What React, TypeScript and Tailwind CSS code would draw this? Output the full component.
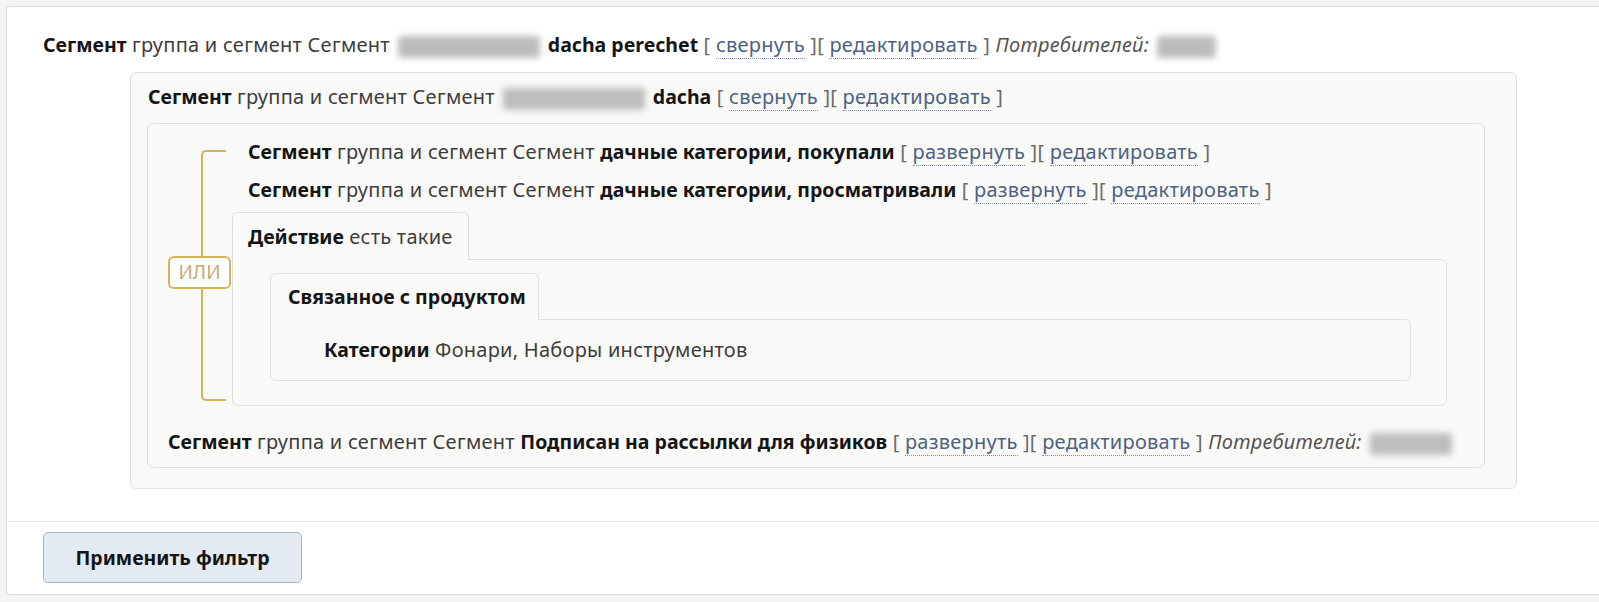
import React from "react";

const Blur = ({ w }: { w: number }) => (
  <span className="inline-block align-middle mx-[8px] h-[22px] bg-[#bdbdbd] rounded-[3px] blur-[3px]" style={{ width: w }} />
);

const Link = ({ children }: { children: React.ReactNode }) => (
  <span className="text-[#4d6183] border-b border-dotted border-[#7d8fb0]">{children}</span>
);

const B = ({ children }: { children: React.ReactNode }) => (
  <b className="font-bold text-[#151515] text-[19.5px] tracking-normal">{children}</b>
);

const Actions = ({ first }: { first: string }) => (
  <>
    {" "}
    <span className="text-[#6b6b6b]">[ </span>
    <Link>{first}</Link>
    <span className="text-[#6b6b6b]"> ][ </span>
    <Link>редактировать</Link>
    <span className="text-[#6b6b6b]"> ]</span>
  </>
);

const Head = () => (
  <>
    <B>Сегмент</B> группа и сегмент Сегмент
  </>
);

export default function App() {
  return (
    <div
      className="min-h-[602px] bg-[#f4f4f2] pt-[6px] pl-[6px] text-[20px] tracking-[0.25px] text-[#3d3d3d]"
      style={{ fontFamily: '"Noto Sans", "Open Sans", sans-serif' }}
    >
      <div className="bg-white border-y border-l border-[#dcdcdc] rounded-l-[4px]">
        <div className="pt-[25px] pb-[32px]">
          <div className="pl-[36px] leading-[26px] whitespace-nowrap">
            <Head />
            <Blur w={142} />
            <B>dacha perechet</B>
            <Actions first="свернуть" />{" "}
            <i className="text-[#555]">Потребителей:</i>
            <Blur w={59} />
          </div>

          <div className="ml-[123px] mt-[14px] w-[1387px] bg-[#f9f9f7] border border-[#e0e0de] rounded-[6px] pt-[11px] pl-[16px] pr-[31px] pb-[20px]">
            <div className="pl-[1px] leading-[26px] whitespace-nowrap">
              <Head />
              <Blur w={142} />
              <B>dacha</B>
              <Actions first="свернуть" />
            </div>

            <div className="mt-[13px] bg-[#f9f9f7] border border-[#e0e0de] rounded-[6px] pt-[15px] pl-[20px] pb-[12px]">
              <div className="flex">
                <div className="w-[64px] shrink-0 flex flex-col pt-[11px] pb-[5px]">
                  <div className="ml-[33px] w-[25px] h-[12px] border-l-2 border-t-2 border-[#d5b25c] rounded-tl-[5px]" />
                  <div className="ml-[33px] w-[2px] grow-[94] bg-[#d5b25c]" />
                  <div className="w-[63px] h-[33px] border-2 border-[#d5b25c] rounded-[6px] bg-white flex items-center justify-center text-[#c6a977] text-[19px] tracking-normal">
                    ИЛИ
                  </div>
                  <div className="ml-[33px] w-[2px] grow-[100] bg-[#d5b25c]" />
                  <div className="ml-[33px] w-[25px] h-[12px] border-l-2 border-b-2 border-[#d5b25c] rounded-bl-[5px]" />
                </div>

                <div className="flex-1 pr-[37px]">
                  <div className="pl-[16px] leading-[26px] whitespace-nowrap">
                    <Head /> <B>дачные категории, покупали</B>
                    <Actions first="развернуть" />
                  </div>
                  <div className="pl-[16px] mt-[12px] leading-[26px] whitespace-nowrap">
                    <Head /> <B>дачные категории, просматривали</B>
                    <Actions first="развернуть" />
                  </div>

                  <div className="mt-[9px]">
                    <div className="relative z-10 -mb-px flex h-[48px] items-center px-[15px] w-[237px] bg-[#f9f9f7] border border-b-0 border-[#e0e0de] rounded-t-[6px] whitespace-nowrap">
                      <B>Действие</B>&nbsp;есть такие
                    </div>
                    <div className="border border-[#e0e0de] rounded-[6px] rounded-tl-none pt-[13px] pl-[37px] pr-[35px] pb-[24px]">
                      <div className="relative z-10 -mb-px flex h-[47px] items-center w-[269px] px-[17px] bg-[#f9f9f7] border border-b-0 border-[#e0e0de] rounded-t-[6px] whitespace-nowrap">
                        <B>Связанное с продуктом</B>
                      </div>
                      <div className="h-[62px] flex items-center pl-[53px] border border-[#e0e0de] rounded-[6px] rounded-tl-none whitespace-nowrap">
                        <span>
                          <B>Категории</B> Фонари, Наборы инструментов
                        </span>
                      </div>
                    </div>
                  </div>
                </div>
              </div>

              <div className="mt-[23px] leading-[26px] whitespace-nowrap">
                <Head /> <B>Подписан на рассылки для физиков</B>
                <Actions first="развернуть" />{" "}
                <i className="text-[#555]">Потребителей:</i>
                <Blur w={82} />
              </div>
            </div>
          </div>
        </div>

        <div className="border-t border-[#e3e3e3] pt-[10px] pb-[11px] pl-[36px]">
          <button className="w-[259px] h-[51px] bg-[#e3eaf2] border border-[#a2b4c8] rounded-[5px] font-bold text-[#151515] text-[19.5px] tracking-normal">
            Применить фильтр
          </button>
        </div>
      </div>
    </div>
  );
}
